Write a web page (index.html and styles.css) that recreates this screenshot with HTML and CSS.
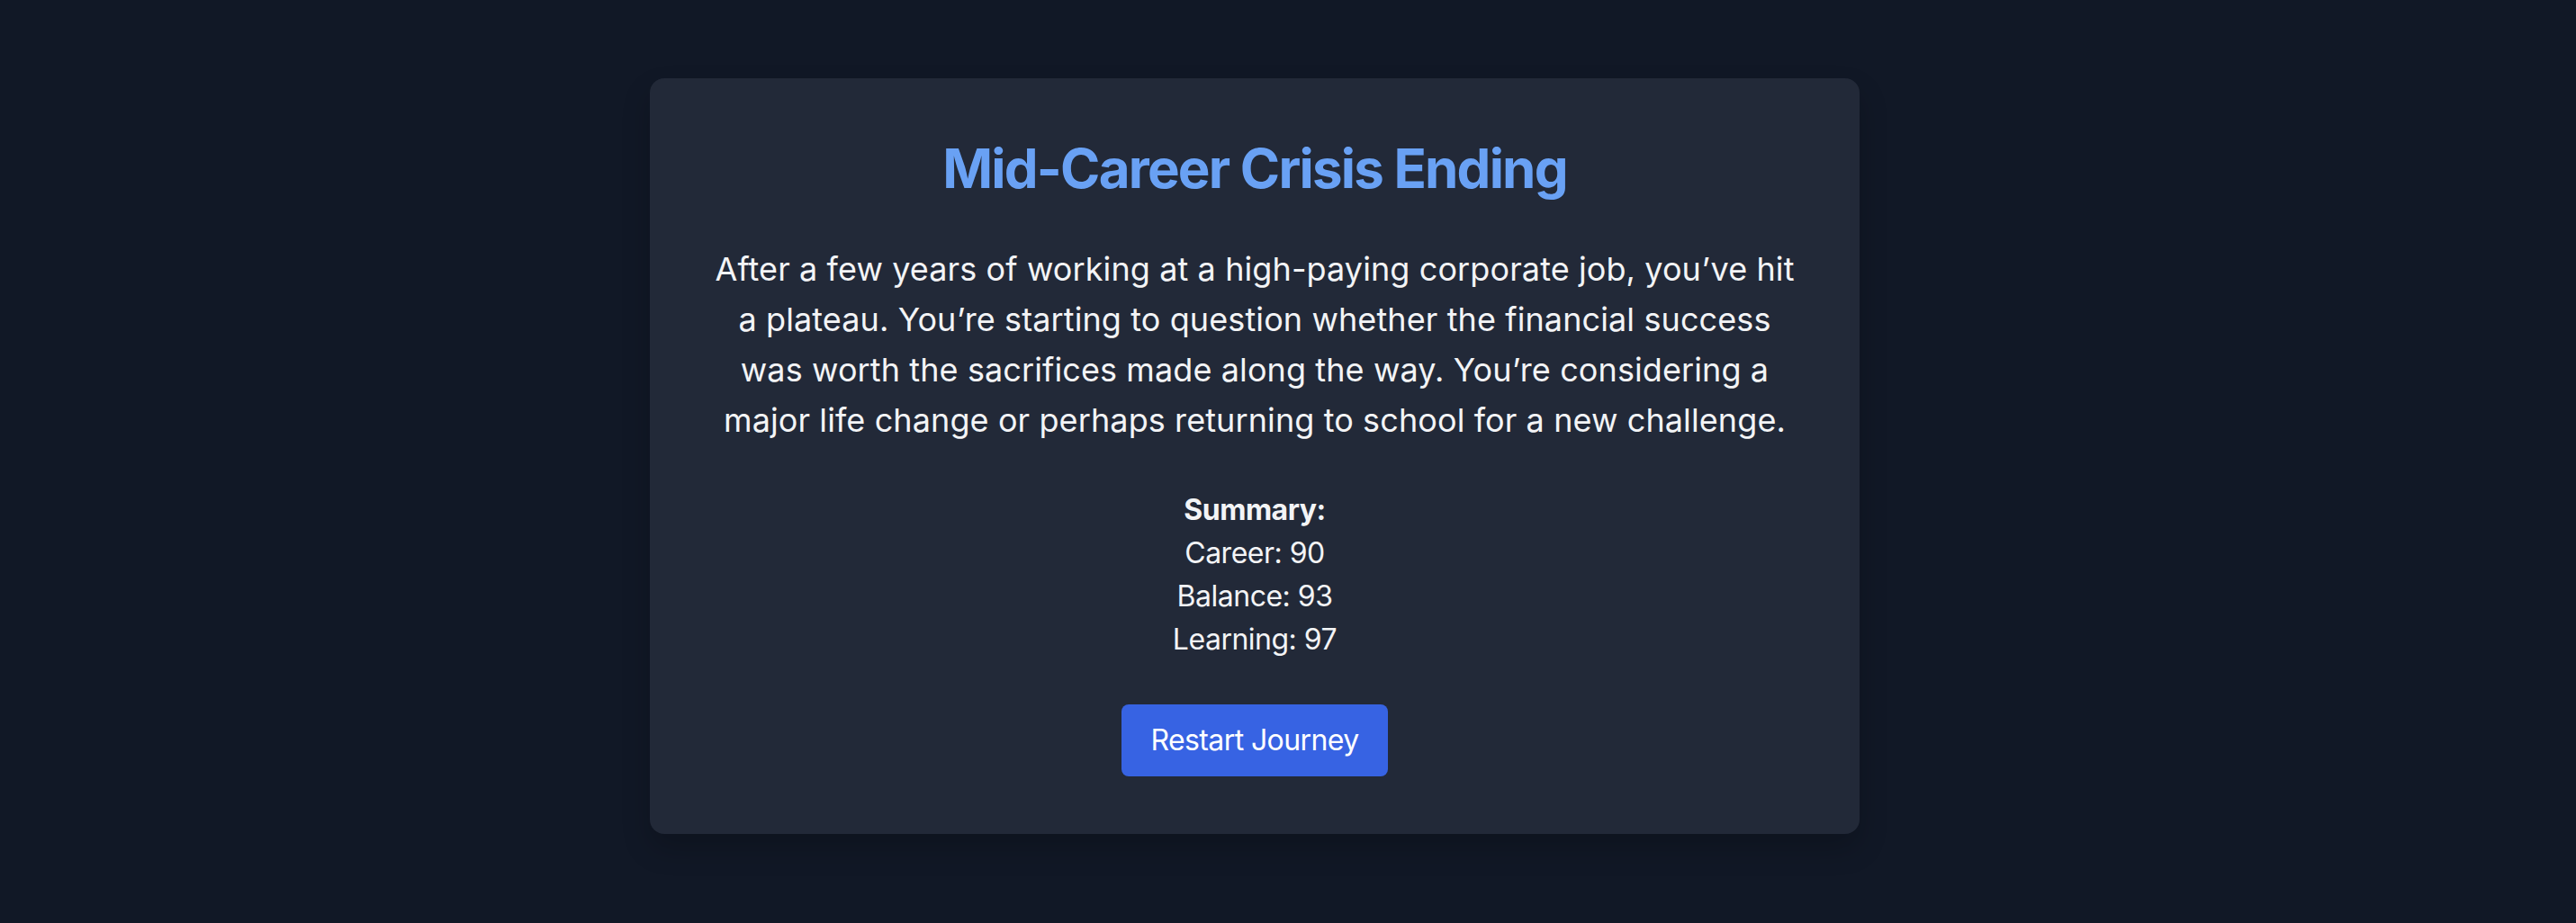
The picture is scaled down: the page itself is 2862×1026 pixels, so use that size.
FILE: index.html
```html
<!DOCTYPE html>
<html lang="en">
<head>
<meta charset="utf-8">
<title>Mid-Career Crisis Ending</title>
<link rel="stylesheet" href="styles.css">
</head>
<body>
<main class="page">
  <section class="card">
    <h1 class="title">Mid-Career Crisis Ending</h1>
    <p class="story">After a few years of working at a high-paying corporate job, you’ve hit a plateau. You’re starting to question whether the financial success was worth the sacrifices made along the way. You’re considering a major life change or perhaps returning to school for a new challenge.</p>
    <div class="summary">
      <div class="summary-head">Summary:</div>
      <div>Career: 90</div>
      <div>Balance: 93</div>
      <div>Learning: 97</div>
    </div>
    <button class="restart" type="button">Restart Journey</button>
  </section>
</main>
</body>
</html>
```

FILE: styles.css
```css
* { box-sizing: border-box; }
html, body { margin: 0; padding: 0; }
body {
  background: #111826;
  color: #f3f4f6;
  font-family: Inter, "Noto Sans", "Liberation Sans", sans-serif;
}
.page {
  min-height: 1026px;
  display: flex;
  justify-content: center;
  align-items: flex-start;
  padding: 87px 74px 0 0;
}
.card {
  width: 1344px;
  background: #222938;
  border-radius: 16px;
  padding: 64px;
  display: flex;
  flex-direction: column;
  align-items: center;
  text-align: center;
  box-shadow: 0 16px 32px rgba(0,0,0,0.2);
}
.title {
  margin: 0 0 48px;
  font-size: 60px;
  line-height: 72px;
  font-weight: 700;
  color: #69a1f4;
  letter-spacing: -1.8px;
}
.story {
  margin: 0 0 48px;
  font-size: 36px;
  line-height: 56px;
  letter-spacing: 0.1px;
}
.summary {
  font-size: 32px;
  line-height: 48px;
  letter-spacing: -0.5px;
}
.summary-head { font-weight: 700; }
.restart {
  margin-top: 48px;
  background: #3763e3;
  color: #ffffff;
  border: none;
  border-radius: 8px;
  padding: 16px 32px;
  font-family: inherit;
  font-size: 32px;
  line-height: 48px;
  letter-spacing: -0.6px;
  cursor: pointer;
}
```
